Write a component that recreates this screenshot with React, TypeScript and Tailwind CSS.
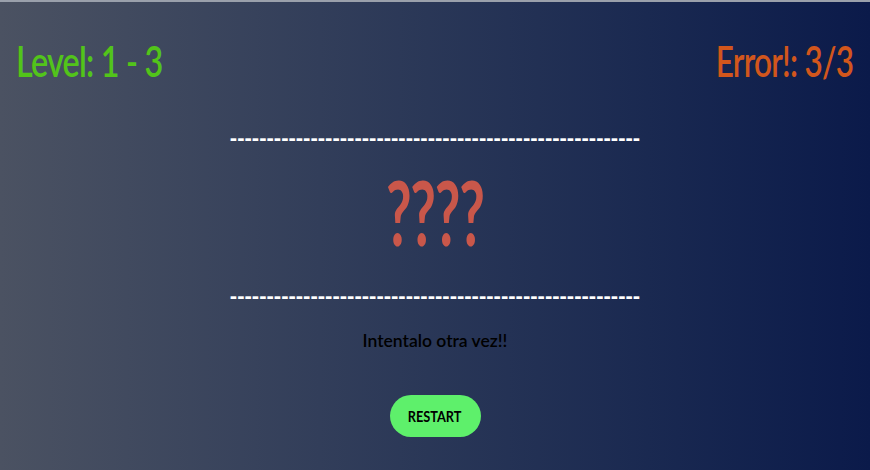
const DASHES = "-".repeat(56)

export default function App() {
  return (
    <div
      className="flex h-[470px] w-[870px] flex-col border-t-2 border-[#9aa0ab] bg-gradient-to-r from-[#4b5262] to-[#0b1a4a]"
      style={{ fontFamily: "Lato, 'Liberation Sans', sans-serif" }}
    >
      <header className="flex items-center justify-between pl-[16px] pr-[17px] pt-[35px]">
        <h1 className="origin-left scale-x-[0.77] text-[42px] font-semibold leading-[48px] tracking-[-1px] text-[#52c41a]">
          Level: 1 - 3
        </h1>
        <h1 className="origin-right scale-x-[0.75] text-[42px] font-semibold leading-[48px] tracking-[-1px] text-[#d2561c]">
          Error!: 3/3
        </h1>
      </header>

      <main className="flex flex-col items-center">
        <div className="mt-[38px] text-[22px] font-bold leading-[30px] text-white" style={{ fontFamily: "'Liberation Sans', sans-serif" }}>
          {DASHES}
        </div>
        <div className="mt-[8px] scale-x-[0.62] text-[90px] font-bold leading-[100px] tracking-[-2px] text-[#c9574a]">????</div>
        <div className="mt-[20px] text-[22px] font-bold leading-[30px] text-white" style={{ fontFamily: "'Liberation Sans', sans-serif" }}>
          {DASHES}
        </div>
        <p className="mt-[18px] text-[17.5px] font-semibold leading-[24px] text-black">Intentalo otra vez!!</p>
        <button className="mt-[42px] h-[42px] w-[91px] rounded-full bg-[#5ef06b] text-black">
          <span className="inline-block scale-x-[0.85] text-[15px] font-bold">RESTART</span>
        </button>
      </main>
    </div>
  )
}
